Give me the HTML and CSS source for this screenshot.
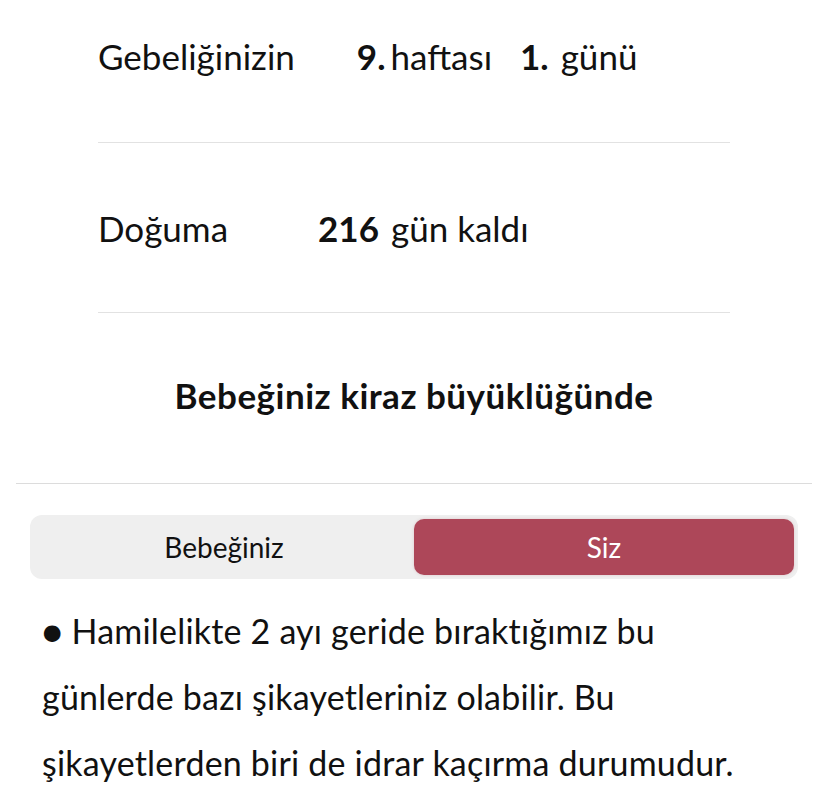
FILE: index.html
```html
<!DOCTYPE html>
<html lang="tr">
<head>
    <meta charset="UTF-8">
    <meta name="viewport" content="width=device-width, initial-scale=1.0">
    <title>Gebelik Takibi</title>
    <link rel="stylesheet" href="styles.css">
</head>
<body>
    <div class="page">
        <div class="info">
            <div class="info-row info-row--first">
                <span class="label">Gebeliğinizin</span>
                <span class="value value--week">
                    <b>9.</b><span class="unit">haftası</span>
                    <b class="day">1.</b><span class="unit unit--wide">günü</span>
                </span>
            </div>
            <div class="info-row">
                <span class="label">Doğuma</span>
                <span class="value value--left">
                    <b>216</b><span class="unit unit--wide">gün kaldı</span>
                </span>
            </div>
            <div class="size-title">Bebeğiniz kiraz büyüklüğünde</div>
        </div>

        <div class="segmented">
            <button class="segment">Bebeğiniz</button>
            <button class="segment segment--active">Siz</button>
        </div>

        <p class="tip">
            ● Hamilelikte 2 ayı geride bıraktığımız bu
            günlerde bazı şikayetleriniz olabilir. Bu
            şikayetlerden biri de idrar kaçırma durumudur.
        </p>
    </div>
</body>
</html>
```

FILE: styles.css
```css
* {
    box-sizing: border-box;
    margin: 0;
    padding: 0;
}

body {
    font-family: Lato, 'Noto Sans', sans-serif;
    background-color: #ffffff;
    color: #111;
    overflow: hidden;
}

.page {
    padding: 0 16px;
}

.info {
    padding: 0 82px;
    border-bottom: 1px solid #dcdcdc;
}

.info-row {
    display: flex;
    align-items: center;
    height: 170px;
    font-size: 35px;
    border-bottom: 1px solid #e2e2e2;
}

.info-row--first {
    height: 143px;
    padding-bottom: 30px;
}

.value--week {
    margin-left: 62px;
}

.value--left {
    margin-left: 90px;
}

.value b {
    font-weight: 700;
}

.unit {
    margin-left: 5px;
}

.unit--wide {
    margin-left: 12px;
}

.day {
    margin-left: 19px;
}

.size-title {
    height: 170px;
    display: flex;
    align-items: center;
    justify-content: center;
    padding-bottom: 6px;
    font-size: 35px;
    font-weight: 700;
    letter-spacing: 0.5px;
}

.segmented {
    display: grid;
    grid-template-columns: 1fr 1fr;
    margin: 31px 14px 0;
    padding: 4px;
    height: 64px;
    background-color: #efefef;
    border-radius: 12px;
}

.segment {
    border: none;
    background: none;
    font-family: inherit;
    font-size: 28px;
    color: #111;
    border-radius: 10px;
}

.segment--active {
    background-color: #ad4759;
    color: #fff;
    box-shadow: 0 0 3px rgba(173, 71, 89, 0.25);
}

.tip {
    margin-top: 19px;
    padding: 0 26px;
    font-size: 34px;
    letter-spacing: 0.2px;
    line-height: 66px;
}
```
